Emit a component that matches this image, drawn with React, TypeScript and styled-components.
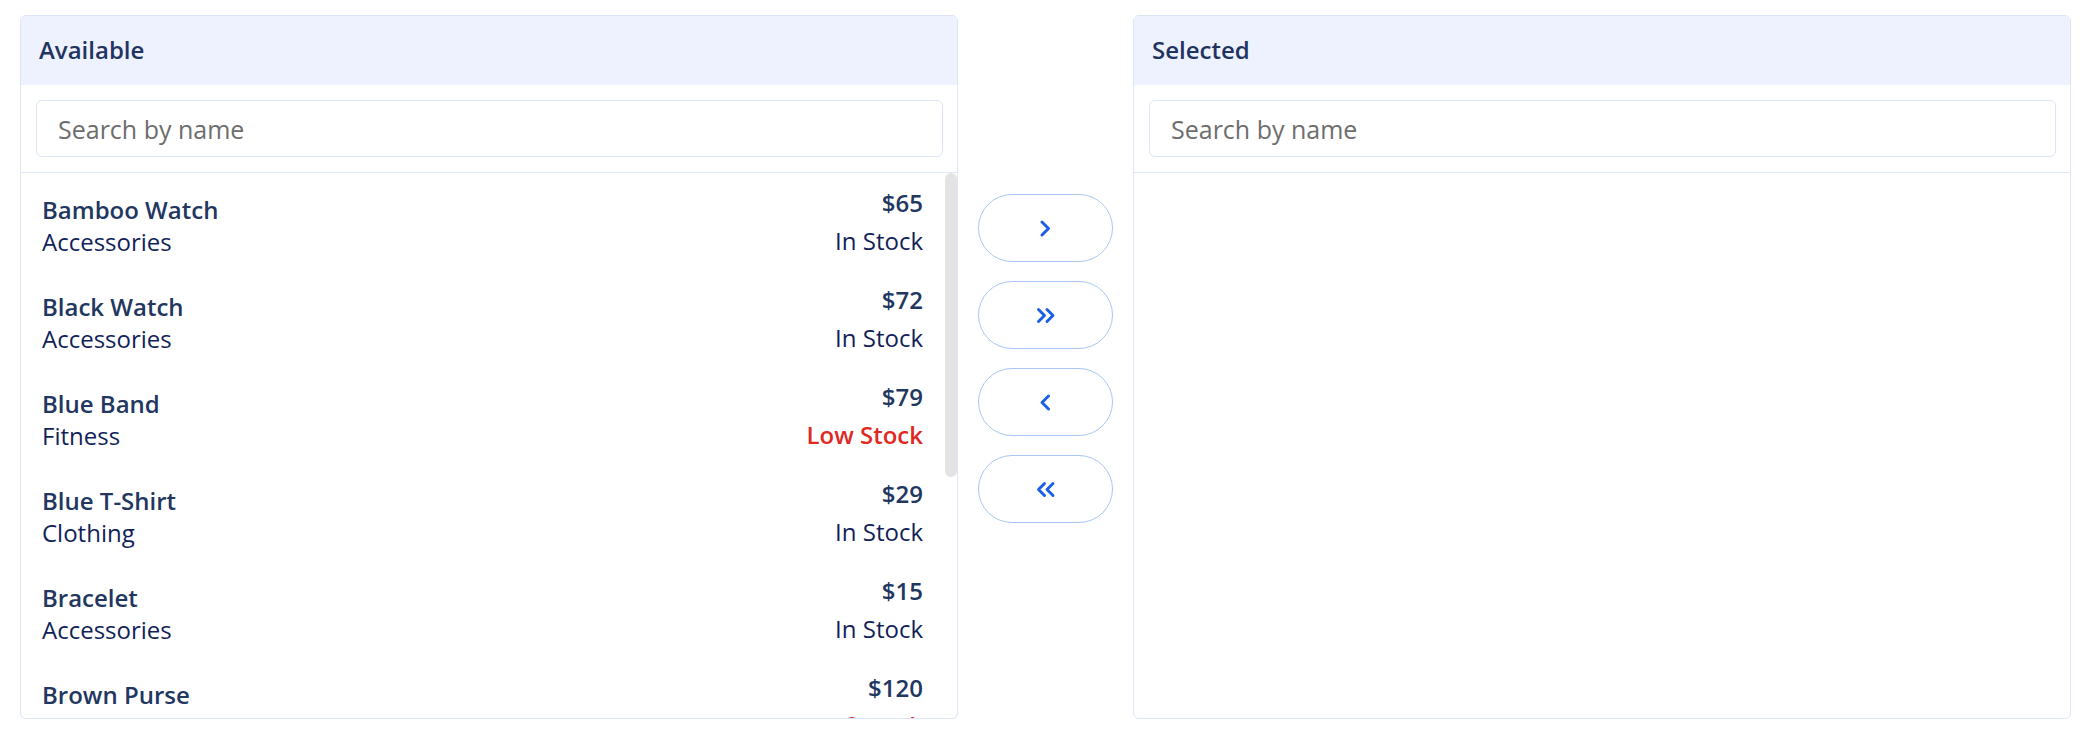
import styled, { createGlobalStyle } from 'styled-components';

const GlobalStyle = createGlobalStyle`
  html, body {
    margin: 0;
    padding: 0;
    background: #ffffff;
  }
  body {
    font-family: 'Open Sans', 'Noto Sans', sans-serif;
    color: #1e3360;
  }
`;

type Stock = 'INSTOCK' | 'LOWSTOCK' | 'OUTOFSTOCK';

interface Product {
  name: string;
  category: string;
  price: number;
  stock: Stock;
}

const products: Product[] = [
  { name: 'Bamboo Watch', category: 'Accessories', price: 65, stock: 'INSTOCK' },
  { name: 'Black Watch', category: 'Accessories', price: 72, stock: 'INSTOCK' },
  { name: 'Blue Band', category: 'Fitness', price: 79, stock: 'LOWSTOCK' },
  { name: 'Blue T-Shirt', category: 'Clothing', price: 29, stock: 'INSTOCK' },
  { name: 'Bracelet', category: 'Accessories', price: 15, stock: 'INSTOCK' },
  { name: 'Brown Purse', category: 'Accessories', price: 120, stock: 'OUTOFSTOCK' },
  { name: 'Chakra Bracelet', category: 'Accessories', price: 32, stock: 'LOWSTOCK' },
  { name: 'Galaxy Earrings', category: 'Accessories', price: 34, stock: 'INSTOCK' },
  { name: 'Game Controller', category: 'Electronics', price: 99, stock: 'LOWSTOCK' },
  { name: 'Gaming Set', category: 'Electronics', price: 299, stock: 'INSTOCK' },
];

const stockLabel: Record<Stock, string> = {
  INSTOCK: 'In Stock',
  LOWSTOCK: 'Low Stock',
  OUTOFSTOCK: 'Out of Stock',
};

const Page = styled.div`
  display: flex;
  align-items: stretch;
  padding: 15px 19px 0 20px;
`;

const Panel = styled.section`
  flex: none;
  width: 938px;
  height: 704px;
  box-sizing: border-box;
  border: 1.5px solid #dce4f6;
  border-radius: 6px;
  display: flex;
  flex-direction: column;
  overflow: hidden;
`;

const Header = styled.div`
  flex: none;
  height: 69px;
  box-sizing: border-box;
  display: flex;
  align-items: center;
  padding: 0 18px 2px;
  background: #eef2fe;
  font-size: 24px;
  font-weight: 600;
  color: #1f3461;
`;

const SearchBar = styled.div`
  flex: none;
  padding: 15px 14px 15px 15px;
  border-bottom: 1.5px solid #e1e8f6;
`;

const SearchInput = styled.input`
  display: block;
  width: 100%;
  box-sizing: border-box;
  height: 57px;
  padding: 0 21px;
  border: 1.5px solid #dbe4f5;
  border-radius: 6px;
  font-family: 'Open Sans', 'Noto Sans', sans-serif;
  font-size: 25px;
  color: #333333;
  background: #ffffff;
  outline: none;

  &::placeholder {
    color: #6d6d6d;
  }
`;

const ListArea = styled.div`
  flex: 1;
  min-height: 0;
  display: flex;
`;

const List = styled.ul`
  flex: 1;
  margin: 0;
  padding: 0;
  list-style: none;
  overflow: hidden;
`;

const ScrollTrack = styled.div`
  flex: none;
  width: 12px;
`;

const ScrollThumb = styled.div`
  height: 304px;
  border-radius: 6px;
  background: #e3e3e3;
`;

const Item = styled.li`
  display: flex;
  align-items: flex-end;
  justify-content: space-between;
  padding: 13px 22px 12px 21px;
  font-size: 24px;
  line-height: 34px;
`;

const Info = styled.div`
  display: flex;
  flex-direction: column;
  line-height: 32px;
`;

const Name = styled.span`
  font-weight: 600;
  color: #22375f;
`;

const Category = styled.span`
  color: #121f5a;
`;

const Meta = styled.div`
  display: flex;
  flex-direction: column;
  align-items: flex-end;
  gap: 4px;
`;

const Price = styled.span`
  font-weight: 600;
  color: #22375f;
`;

const Status = styled.span<{ $stock: Stock }>`
  color: ${(p) => (p.$stock === 'INSTOCK' ? '#121f5a' : '#e0291f')};
  font-weight: ${(p) => (p.$stock === 'INSTOCK' ? 400 : 600)};
`;

const Controls = styled.div`
  flex: none;
  width: 175px;
  box-sizing: border-box;
  padding-top: 2px;
  display: flex;
  flex-direction: column;
  align-items: center;
  justify-content: center;
`;

const MoveButton = styled.button`
  width: 135px;
  height: 68px;
  margin-bottom: 19px;
  box-sizing: border-box;
  border: 1.5px solid #a9c6f5;
  border-radius: 34px;
  background: #ffffff;
  display: flex;
  align-items: center;
  justify-content: center;
  padding: 0;
  cursor: pointer;
  color: #1a5fe6;
`;

const Chevron = ({ dir, double }: { dir: 'left' | 'right'; double?: boolean }) => {
  const one = dir === 'right' ? 'M5 2 L11.5 8.5 L5 15' : 'M11.5 2 L5 8.5 L11.5 15';
  const two =
    dir === 'right'
      ? 'M2.5 2.5 L8.5 8.5 L2.5 14.5 M11 2.5 L17 8.5 L11 14.5'
      : 'M8.5 2.5 L2.5 8.5 L8.5 14.5 M17 2.5 L11 8.5 L17 14.5';
  return (
    <svg width={double ? 20 : 17} height="17" viewBox={double ? '0 0 20 17' : '0 0 17 17'} fill="none">
      <path d={double ? two : one} stroke="currentColor" strokeWidth="2.9" strokeLinecap="round" strokeLinejoin="round" />
    </svg>
  );
};

const PickPanel = ({ title, items }: { title: string; items: Product[] }) => (
  <Panel>
    <Header>{title}</Header>
    <SearchBar>
      <SearchInput placeholder="Search by name" />
    </SearchBar>
    <ListArea>
      <List>
        {items.map((p) => (
          <Item key={p.name}>
            <Info>
              <Name>{p.name}</Name>
              <Category>{p.category}</Category>
            </Info>
            <Meta>
              <Price>${p.price}</Price>
              <Status $stock={p.stock}>{stockLabel[p.stock]}</Status>
            </Meta>
          </Item>
        ))}
      </List>
      {items.length > 0 && (
        <ScrollTrack>
          <ScrollThumb />
        </ScrollTrack>
      )}
    </ListArea>
  </Panel>
);

export default function App() {
  return (
    <>
      <GlobalStyle />
      <Page>
        <PickPanel title="Available" items={products} />
        <Controls>
          <MoveButton aria-label="Move to selected">
            <Chevron dir="right" />
          </MoveButton>
          <MoveButton aria-label="Move all to selected">
            <Chevron dir="right" double />
          </MoveButton>
          <MoveButton aria-label="Move to available">
            <Chevron dir="left" />
          </MoveButton>
          <MoveButton aria-label="Move all to available">
            <Chevron dir="left" double />
          </MoveButton>
        </Controls>
        <PickPanel title="Selected" items={[]} />
      </Page>
    </>
  );
}
